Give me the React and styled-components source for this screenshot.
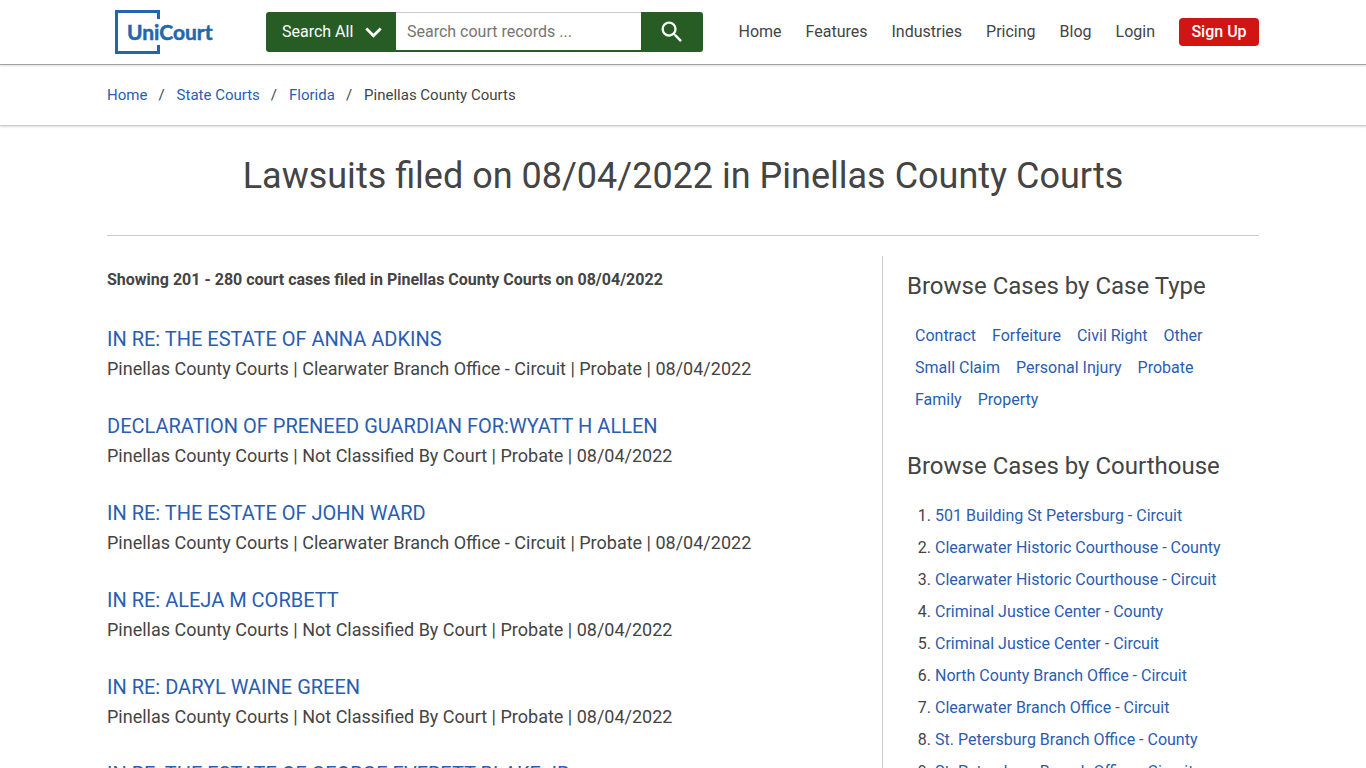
import React, { useState } from 'react';
import styled, { createGlobalStyle } from 'styled-components';

const TextColor = '#444';
const LinkColor = '#2a5db0';
const Green = '#275d25';

const GlobalStyle = createGlobalStyle`
  *, *::before, *::after {
    box-sizing: border-box;
  }
  body {
    margin: 0;
    background: #fff;
    color: ${TextColor};
    font-family: Roboto, 'Liberation Sans', sans-serif;
    font-size: 16px;
    line-height: 24px;
  }
`;
const Container = styled.div`
  max-width: 1184px;
  margin: 0 auto;
  padding: 0 16px;
`;
const Header = styled.header`
  border-bottom: 1px solid #a3a3a3;
  box-shadow: 0 1px 2px rgba(0, 0, 0, 0.12);
`;
const HeaderRow = styled(Container)`
  display: flex;
  align-items: center;
  height: 64px;
`;
const LogoLink = styled.a`
  display: flex;
  margin: 0 48px 0 8px;
`;
const SearchForm = styled.form`
  display: flex;
  flex: 0 1 437px;
  height: 40px;
`;
const SelectBox = styled.div`
  display: grid;
  flex: 0 0 130px;
  align-items: center;
  background: ${Green};
  border-radius: 3px 0 0 3px;
  & > * {
    grid-area: 1 / 1;
  }
  & > svg {
    justify-self: end;
    margin-right: 14px;
    pointer-events: none;
  }
`;
const SearchSelect = styled.select`
  appearance: none;
  width: 100%;
  height: 40px;
  padding: 0 40px 0 16px;
  border: 0;
  background: transparent;
  color: #fff;
  font: inherit;
  option {
    color: ${TextColor};
  }
`;
const SearchInput = styled.input`
  flex: 1;
  min-width: 0;
  padding: 0 11px;
  border: 0;
  border-top: 1px solid #ccc;
  border-bottom: 2px solid ${Green};
  border-radius: 0;
  font: inherit;
  color: ${TextColor};
  &::placeholder {
    color: #757575;
  }
`;
const SearchButton = styled.button`
  display: flex;
  flex: 0 0 62px;
  align-items: center;
  justify-content: center;
  padding: 0;
  border: 0;
  border-radius: 0 3px 3px 0;
  background: ${Green};
  cursor: pointer;
`;
const Nav = styled.nav`
  display: flex;
  align-items: center;
  gap: 24px;
  margin-left: auto;
`;
const NavLink = styled.a`
  color: ${TextColor};
  text-decoration: none;
  white-space: nowrap;
  &:hover {
    color: ${LinkColor};
  }
`;
const SignUp = styled.a`
  min-width: 80px;
  padding: 2px 12px;
  border-radius: 4px;
  background: #d11414;
  color: #fff;
  font-weight: 500;
  text-align: center;
  text-decoration: none;
  white-space: nowrap;
`;
const BreadcrumbBar = styled.nav`
  border-bottom: 1px solid #ccc;
  box-shadow: 0 1px 2px rgba(0, 0, 0, 0.15);
`;
const Breadcrumbs = styled.ol`
  display: flex;
  align-items: center;
  height: 60px;
  margin: 0;
  padding: 0;
  list-style: none;
  font-size: 15px;
  li + li::before {
    content: '/';
    margin: 0 12px 0 11px;
  }
`;
const TextLink = styled.a`
  color: ${LinkColor};
  text-decoration: none;
  &:hover {
    text-decoration: underline;
  }
`;
const Title = styled.h1`
  margin: 0;
  padding: 26px 0 35px;
  border-bottom: 1px solid #ccc;
  font-size: 36px;
  font-weight: 400;
  line-height: 48px;
  text-align: center;
`;
const Columns = styled.div`
  display: flex;
  margin-top: 20px;
`;
const Results = styled.main`
  flex: 1;
  padding: 12px 24px 0 0;
`;
const Summary = styled.p`
  margin: 0 0 32px;
  font-weight: 700;
`;
const CaseItem = styled.article`
  margin-bottom: 27px;
  line-height: 30px;
`;
const CaseTitle = styled.h2`
  margin: 0;
  font-size: 20px;
  font-weight: 400;
`;
const CaseInfo = styled.p`
  margin: 0;
  font-size: 18px;
`;
const Sidebar = styled.aside`
  flex: 0 0 377px;
  padding: 14px 8px 0 24px;
  border-left: 1px solid #ccc;
`;
const SidebarSection = styled.section`
  margin-bottom: 34px;
  line-height: 32px;
`;
const SidebarTitle = styled.h2`
  margin: 0 0 18px;
  font-size: 24px;
  font-weight: 400;
`;
const TypeList = styled.ul`
  display: flex;
  flex-wrap: wrap;
  gap: 0 16px;
  margin: 0;
  padding: 0 0 0 8px;
  list-style: none;
`;
const CourthouseList = styled.ol`
  margin: 0;
  padding: 0 0 0 28px;
`;

const navItems = ['Home', 'Features', 'Industries', 'Pricing', 'Blog', 'Login'];

const office = 'Clearwater Branch Office - Circuit';
const unclassified = 'Not Classified By Court';

const cases = [
  { title: 'IN RE: THE ESTATE OF ANNA ADKINS', court: office },
  { title: 'DECLARATION OF PRENEED GUARDIAN FOR:WYATT H ALLEN', court: unclassified },
  { title: 'IN RE: THE ESTATE OF JOHN WARD', court: office },
  { title: 'IN RE: ALEJA M CORBETT', court: unclassified },
  { title: 'IN RE: DARYL WAINE GREEN', court: unclassified },
  { title: 'IN RE: THE ESTATE OF GEORGE EVERETT BLAKE JR', court: office }
];

const caseTypes = [
  'Contract',
  'Forfeiture',
  'Civil Right',
  'Other',
  'Small Claim',
  'Personal Injury',
  'Probate',
  'Family',
  'Property'
];

const courthouses = [
  '501 Building St Petersburg - Circuit',
  'Clearwater Historic Courthouse - County',
  'Clearwater Historic Courthouse - Circuit',
  'Criminal Justice Center - County',
  'Criminal Justice Center - Circuit',
  'North County Branch Office - Circuit',
  'Clearwater Branch Office - Circuit',
  'St. Petersburg Branch Office - County',
  'St. Petersburg Branch Office - Circuit'
];

const Logo = () => (
  <svg width='103' height='44' viewBox='0 0 103 44' role='img' aria-label='UniCourt'>
    <path
      d='M43.5 9V1.5H1.5V42.5H43.5V35'
      fill='none'
      stroke='#2466ad'
      strokeWidth='3'
    />
    <text
      x='12'
      y='30'
      fill='#2466ad'
      stroke='#2466ad'
      strokeWidth='0.5'
      fontFamily="Lato, 'Open Sans', sans-serif"
      fontSize='21'
      fontWeight='700'
    >
      UniCourt
    </text>
  </svg>
);

const SearchBar = () => {
  const [scope, setScope] = useState('all');
  const [query, setQuery] = useState('');
  return (
    <SearchForm role='search' onSubmit={e => e.preventDefault()}>
      <SelectBox>
        <SearchSelect
          aria-label='Search in'
          value={scope}
          onChange={e => setScope(e.target.value)}
        >
          <option value='all'>Search All</option>
        </SearchSelect>
        <svg width='17' height='11' viewBox='0 0 17 11' aria-hidden='true'>
          <path d='M1.3 1.5L8.5 8.7L15.7 1.5' fill='none' stroke='#fff' strokeWidth='2.8' />
        </svg>
      </SelectBox>
      <SearchInput
        type='text'
        aria-label='Search court records'
        placeholder='Search court records ...'
        value={query}
        onChange={e => setQuery(e.target.value)}
      />
      <SearchButton type='submit' aria-label='Search'>
        <svg width='28' height='28' viewBox='0 0 24 24' fill='#fff' aria-hidden='true'>
          <path d='M15.5 14h-.79l-.28-.27A6.47 6.47 0 0 0 16 9.5 6.5 6.5 0 1 0 9.5 16c1.61 0 3.09-.59 4.23-1.57l.27.28v.79l5 4.99L20.49 19l-4.99-5zm-6 0C7.01 14 5 11.99 5 9.5S7.01 5 9.5 5 14 7.01 14 9.5 11.99 14 9.5 14z' />
        </svg>
      </SearchButton>
    </SearchForm>
  );
};

const App = () => {
  return (
    <>
      <GlobalStyle />
      <Header>
        <HeaderRow>
          <LogoLink href='#home'>
            <Logo />
          </LogoLink>
          <SearchBar />
          <Nav>
            {navItems.map(item => (
              <NavLink key={item} href={'#' + item.toLowerCase()}>
                {item}
              </NavLink>
            ))}
            <SignUp href='#signup'>Sign Up</SignUp>
          </Nav>
        </HeaderRow>
      </Header>
      <BreadcrumbBar aria-label='Breadcrumb'>
        <Container>
          <Breadcrumbs>
            <li>
              <TextLink href='#home'>Home</TextLink>
            </li>
            <li>
              <TextLink href='#states'>State Courts</TextLink>
            </li>
            <li>
              <TextLink href='#florida'>Florida</TextLink>
            </li>
            <li>Pinellas County Courts</li>
          </Breadcrumbs>
        </Container>
      </BreadcrumbBar>
      <Container>
        <Title>Lawsuits filed on 08/04/2022 in Pinellas County Courts</Title>
        <Columns>
          <Results>
            <Summary>
              Showing 201 - 280 court cases filed in Pinellas County Courts on 08/04/2022
            </Summary>
            {cases.map(item => (
              <CaseItem key={item.title}>
                <CaseTitle>
                  <TextLink href='#case'>{item.title}</TextLink>
                </CaseTitle>
                <CaseInfo>
                  Pinellas County Courts | {item.court} | Probate | 08/04/2022
                </CaseInfo>
              </CaseItem>
            ))}
          </Results>
          <Sidebar>
            <SidebarSection>
              <SidebarTitle>Browse Cases by Case Type</SidebarTitle>
              <TypeList>
                {caseTypes.map(type => (
                  <li key={type}>
                    <TextLink href='#type'>{type}</TextLink>
                  </li>
                ))}
              </TypeList>
            </SidebarSection>
            <SidebarSection>
              <SidebarTitle>Browse Cases by Courthouse</SidebarTitle>
              <CourthouseList>
                {courthouses.map(name => (
                  <li key={name}>
                    <TextLink href='#courthouse'>{name}</TextLink>
                  </li>
                ))}
              </CourthouseList>
            </SidebarSection>
          </Sidebar>
        </Columns>
      </Container>
    </>
  );
};

export default App;
